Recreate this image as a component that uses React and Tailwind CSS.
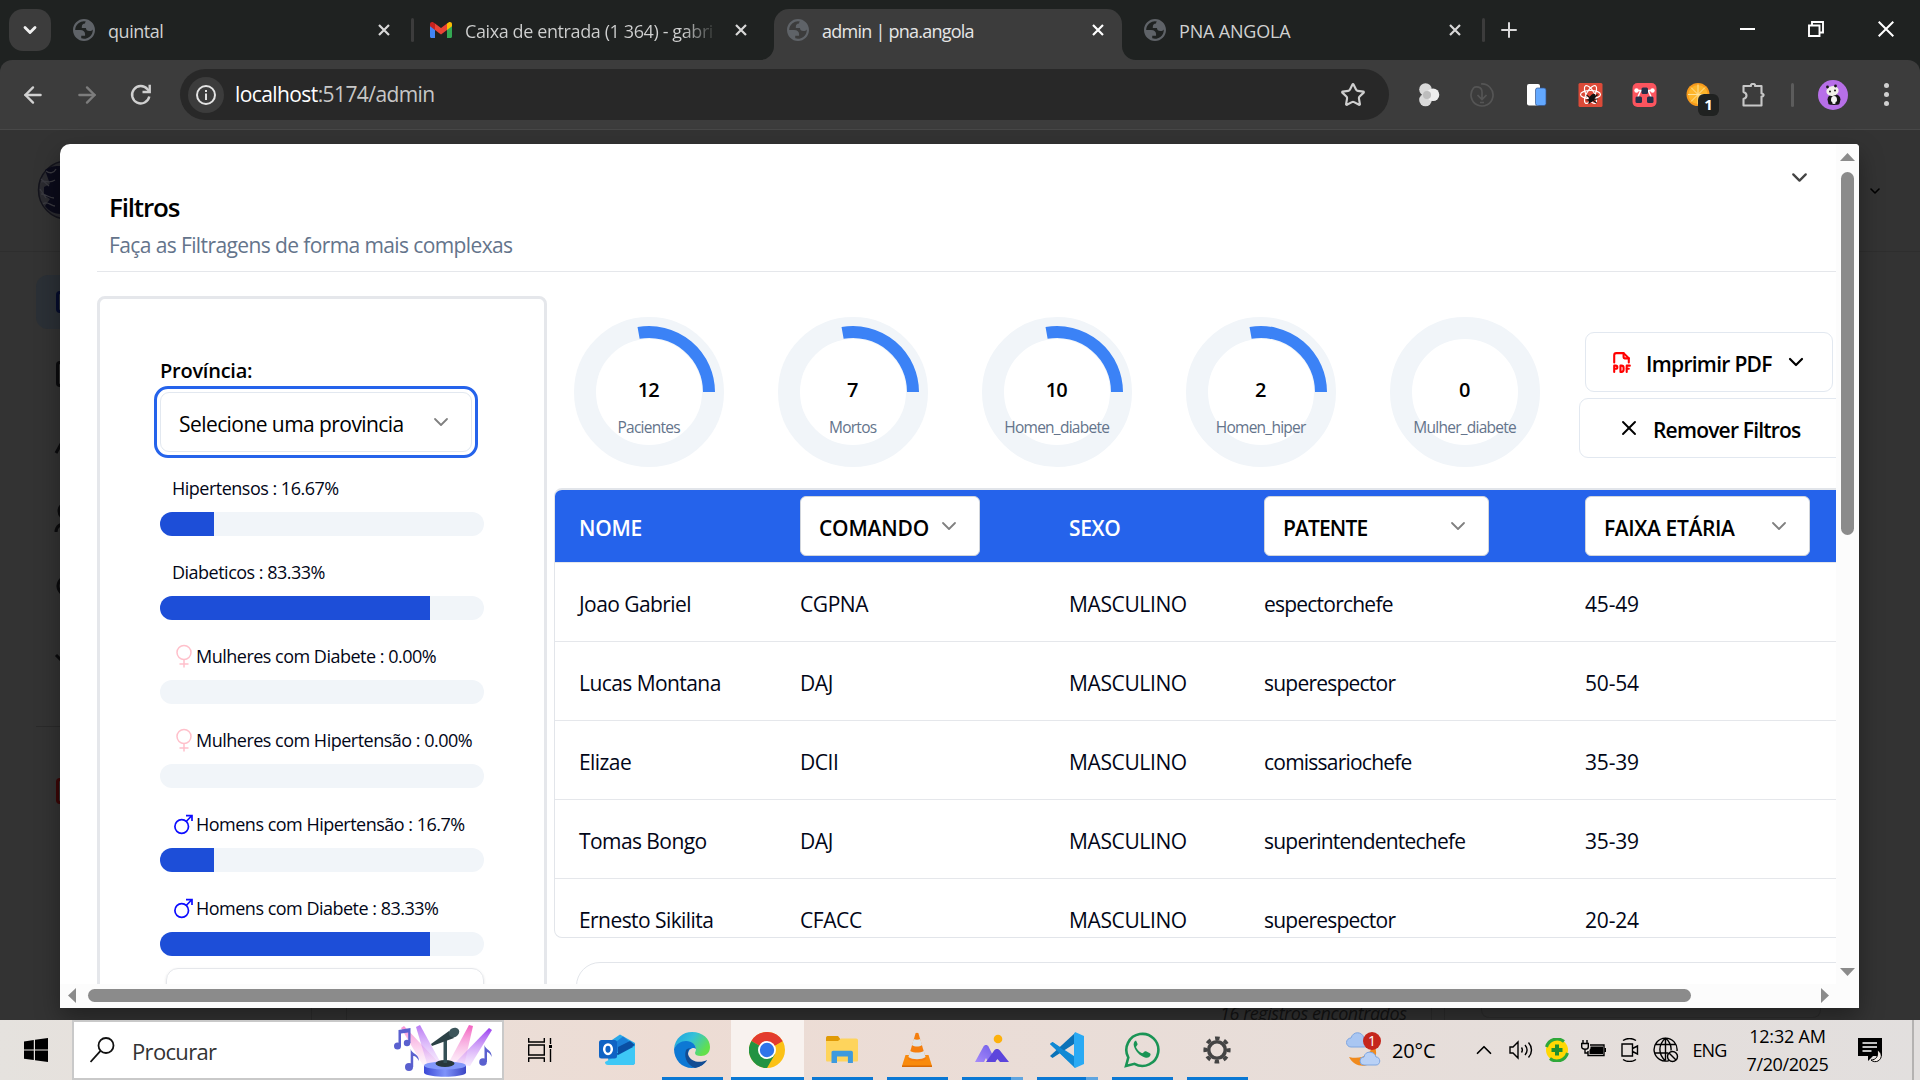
import React from "react";
import { TbFileTypePdf } from "react-icons/tb";
import { ArrowLeft, ArrowRight, ChevronDown, ChevronUp, Plus, Star, X } from "lucide-react";

/* ---------- Browser chrome ---------- */

function Globe() {
  return (
    <svg viewBox="2 2 20 20" className="size-[22px] shrink-0">
      <path
        fillRule="evenodd"
        fill="#5f6368"
        d="M12 2C6.480 2 2 6.480 2 12s4.480 10 10 10 10-4.480 10-10S17.520 2 12 2zM4 12h4.400c3.407.022 4.922 1.730 4.543 5.127H9.488v2.470a8.004 8.004 0 0 0 10.498-8.083C19.327 12.504 18.332 13 17 13c-2.137 0-3.206-.916-3.206-2.750h-3.748c-.274-2.728.683-4.092 2.870-4.092 0-.975.327-1.597.811-1.970A8.004 8.004 0 0 0 4 12z"
      />
    </svg>
  );
}

function Gmail() {
  return (
    <svg viewBox="0 0 22 16" className="h-4 w-[22px] shrink-0">
      <path d="M0 2v12.500c0 .8.7 1.500 1.500 1.500H5V6z" fill="#4285f4" />
      <path d="M22 2v12.500c0 .8-.7 1.500-1.500 1.500H17V6z" fill="#34a853" />
      <path d="M17 1.600V8l5-3.700V2.200c0-2-2-2.800-3.500-1.700z" fill="#fbbc04" />
      <path d="M5 1.600V8L0 4.300V2.200C0 .2 2-.6 3.500.5z" fill="#c5221f" />
      <path d="M5 8V1.600l6 4.500 6-4.500V8l-6 4.500z" fill="#ea4335" />
    </svg>
  );
}

function TabClose({ bright }) {
  return (
    <svg viewBox="0 0 12 12" className="size-3 shrink-0">
      <path d="M1 1l10 10M11 1L1 11" stroke={bright ? "#fff" : "#d8d8d8"} strokeWidth="2.2" />
    </svg>
  );
}

function Tab({ icon, children }) {
  return (
    <div className="flex w-[317px] items-center gap-[13px]">
      {icon}
      <div className="min-w-0 flex-1 whitespace-nowrap pt-[3px] text-[18px] text-[#d0d1d1]">{children}</div>
      <TabClose />
    </div>
  );
}

function TabStrip() {
  return (
    <div className="flex h-[60px] shrink-0 bg-[#1f2221]">
      <div className="ml-[9px] mt-[9px] flex size-[42px] items-center justify-center rounded-[14px] bg-[#3c3c3c]">
        <ChevronDown size={20} strokeWidth={3.4} color="#f0f0f0" />
      </div>
      <div className="ml-[22px] flex">
        <Tab icon={<Globe />}>
          <span className="tracking-[-0.025em]">quintal</span>
        </Tab>
      </div>
      <div className="ml-[21px] mt-[18px] h-6 w-[3px] rounded bg-[#3c3c3c]" />
      <div className="ml-4 flex">
        <Tab icon={<Gmail />}>
          <span className="bg-gradient-to-r from-[#d0d1d1] from-88% to-[#3a3d3c] bg-clip-text tracking-[-0.022em] text-transparent">
            Caixa de entrada (1 364) - gabri
          </span>
        </Tab>
      </div>
      <div className="relative ml-[27px] mt-[9px] flex w-[348px] items-center rounded-t-[15px] bg-[#3c3c3c] pb-[9px] pl-[13px] pr-[18px]">
        <svg viewBox="0 0 14 14" className="absolute -left-[14px] bottom-0 size-[14px]">
          <path d="M14 0V14H0A14 14 0 0 0 14 0z" fill="#3c3c3c" />
        </svg>
        <svg viewBox="0 0 14 14" className="absolute -right-[14px] bottom-0 size-[14px]">
          <path d="M0 0V14H14A14 14 0 0 1 0 0z" fill="#3c3c3c" />
        </svg>
        <Globe />
        <span className="ml-[13px] flex-1 whitespace-nowrap pt-[3px] text-[18px] tracking-[-0.042em] text-[#e6e6e6]">
          admin | pna.angola
        </span>
        <TabClose bright />
      </div>
      <div className="ml-[22px] flex">
        <Tab icon={<Globe />}>
          <span className="tracking-[-0.010em]">PNA ANGOLA</span>
        </Tab>
      </div>
      <div className="ml-[21px] mt-[18px] h-6 w-[3px] rounded bg-[#3c3c3c]" />
      <div className="ml-3 flex items-center">
        <Plus size={24} strokeWidth={2} color="#dadada" />
      </div>
      <div className="ml-auto mr-[26px] flex items-center pb-[2px]">
        <div className="h-[2px] w-[15px] bg-white" />
        <svg viewBox="0 0 16 16" className="ml-[53px] size-4">
          <path d="M1 4.500h10.500V15H1zM4 4V1h11v10.500h-3" fill="none" stroke="#fff" strokeWidth="1.900" />
        </svg>
        <svg viewBox="0 0 16 16" className="ml-[54px] size-4">
          <path d="M.7.7l14.600 14.600M15.300.7L.7 15.300" stroke="#fff" strokeWidth="2" />
        </svg>
      </div>
    </div>
  );
}

function Extensions() {
  return (
    <div className="ml-[26px] flex items-center gap-7">
      <svg viewBox="0 0 26 26" className="size-[26px]">
        <circle cx="10.500" cy="7.500" r="6.300" fill="#d9d9d9" />
        <circle cx="10.500" cy="18" r="6.300" fill="#d9d9d9" />
        <circle cx="18" cy="12.800" r="6.300" fill="#efefef" />
        <circle cx="12" cy="13" r="4" fill="#bdbdbd" />
      </svg>
      <svg viewBox="0 0 26 26" className="size-[26px]" fill="none" stroke="#555" strokeWidth="1.700">
        <path d="M12 2A11 11 0 1 1 4.500 6C6.500 4 13 4.500 13 10v7.500M8.500 13l4.500 4.500 4.500-4.500M11 20.500h4" />
      </svg>
      <svg viewBox="0 0 26 26" className="size-[26px]">
        <rect x="4" y="2" width="13" height="21.500" rx="2" fill="#fff" />
        <rect x="12.500" y="6" width="10.500" height="17.500" rx="2" fill="#62a8ff" stroke="#35548c" strokeWidth=".7" />
      </svg>
      <svg viewBox="0 0 26 26" className="size-[26px]">
        <rect x="1.500" y="1" width="24" height="24" rx="1.500" fill="#dc4a38" />
        <g fill="none" stroke="#fff" strokeWidth="1.200">
          <ellipse cx="13.500" cy="12.500" rx="10" ry="4" />
          <ellipse cx="13.500" cy="12.500" rx="10" ry="4" transform="rotate(60 13.500 12.500)" />
          <ellipse cx="13.500" cy="12.500" rx="10" ry="4" transform="rotate(120 13.500 12.500)" />
        </g>
        <ellipse cx="15" cy="16" rx="2.600" ry="4.800" fill="#111" transform="rotate(35 15 16)" />
        <path d="M9.500 13l10 8M20.500 12.500l-9 9M9.500 18l11-1" stroke="#111" strokeWidth="1.200" />
      </svg>
      <svg viewBox="0 0 26 26" className="size-[26px]">
        <rect x="1.500" y="1" width="24" height="24" rx="5" fill="#fb545e" />
        <path d="M5.500 8.500h16M9.500 9L6 17M17.500 9l3.500 8" stroke="#fff" strokeWidth="1.500" />
        <circle cx="5.500" cy="8.500" r="2.200" fill="#fff" />
        <circle cx="21.500" cy="8.500" r="2.200" fill="#fff" />
        <rect x="10.500" y="5.500" width="6.500" height="6.500" rx="1.500" fill="#25304a" />
        <rect x="4.500" y="14.500" width="6.500" height="6.500" rx="1.500" fill="#25304a" />
        <rect x="16" y="14.500" width="6.500" height="6.500" rx="1.500" fill="#25304a" />
      </svg>
      <div className="relative size-[26px]">
        <svg viewBox="0 0 26 26" className="size-[26px]">
          <circle cx="13" cy="12.500" r="11.500" fill="#f79a1c" />
          <circle cx="13" cy="12.500" r="9.600" fill="#fdb52b" />
          <path
            d="M13 2.500v20M3 12.500h20M6 5.500l14 14M20 5.500l-14 14"
            stroke="#ffe29a"
            strokeWidth="1"
          />
        </svg>
        <div className="absolute left-[13px] top-[12px] flex h-[22px] w-[21px] items-center justify-center rounded-[6px] bg-[#202221] text-[15px] font-bold leading-none text-white">
          1
        </div>
      </div>
      <svg viewBox="0 0 26 26" className="size-[26px]" fill="none" stroke="#c7c7c7" strokeWidth="2.100">
        <path
          d="M6.500 4h5.500a1.500 1.500 0 0 1 1-2h2a1.500 1.500 0 0 1 1 2h6.500v7.500a2 2 0 0 1 2 1v1a2 2 0 0 1-2 1V23.500H4.500v-6.500c4-1.500 4-5.500 0-7V4z"
          strokeLinejoin="round"
        />
      </svg>
    </div>
  );
}

function Toolbar() {
  return (
    <div className="h-[70px] shrink-0 bg-[#1f2221]">
      <div className="flex h-[70px] items-center rounded-t-[12px] border-b border-[#484848] bg-[#3c3c3c]">
        <ArrowLeft className="ml-5" size={26} strokeWidth={2.2} color="#d0d0d0" />
        <ArrowRight className="ml-7" size={26} strokeWidth={2.2} color="#7d7d7d" />
        <svg viewBox="0 0 24 24" className="ml-[29px] size-6" fill="none" stroke="#d0d0d0" strokeWidth="2.400">
          <path d="M20.300 13.500A8.700 8.700 0 1 1 18.500 6.200L20 8" />
          <path d="M20.700 1.800V9H13.500" />
        </svg>
        <div className="ml-[27px] flex h-[51px] w-[1209px] items-center rounded-full bg-[#282828] pl-2 pr-[23px]">
          <div className="flex size-9 items-center justify-center rounded-full bg-[#3c3c3c]">
            <svg viewBox="0 0 22 22" className="size-[22px]">
              <circle cx="11" cy="11" r="9" fill="none" stroke="#e3e3e3" strokeWidth="2" />
              <path d="M10 9.500h2V16h-2zM10 6h2v2h-2z" fill="#e3e3e3" />
            </svg>
          </div>
          <span className="ml-[11px] text-[21px] leading-none tracking-[-0.028em] text-[#c7c7c7]">
            <span className="text-white">localhost</span>:5174/admin
          </span>
          <Star className="ml-auto" size={26} strokeWidth={2} color="#cfcfcf" />
        </div>
        <Extensions />
        <div className="ml-[26px] h-6 w-[3px] rounded bg-[#5c5c5c]" />
        <svg viewBox="0 0 30 30" className="ml-6 size-[30px]">
          <circle cx="15" cy="15" r="15" fill="#b76fe8" />
          <ellipse cx="16" cy="19.500" rx="6.500" ry="5.500" fill="#161616" />
          <ellipse cx="16" cy="20" rx="3" ry="4" fill="#f4f4f4" />
          <ellipse cx="14.500" cy="11" rx="6.200" ry="4.800" fill="#f1f1e9" transform="rotate(-12 14.500 11)" />
          <circle cx="9.500" cy="7" r="1.400" fill="#161616" />
          <circle cx="17.500" cy="6" r="1.400" fill="#161616" />
          <circle cx="12" cy="11.500" r="1" fill="#161616" />
          <circle cx="17" cy="10.500" r="1" fill="#161616" />
          <ellipse cx="12.300" cy="23" rx="2.200" ry="1.700" fill="#161616" />
          <ellipse cx="19.500" cy="23" rx="2.200" ry="1.700" fill="#161616" />
        </svg>
        <div className="ml-9 flex flex-col gap-[4px]">
          <div className="size-[5px] rounded-full bg-[#d0d0d0]" />
          <div className="size-[5px] rounded-full bg-[#d0d0d0]" />
          <div className="size-[5px] rounded-full bg-[#d0d0d0]" />
        </div>
      </div>
    </div>
  );
}

/* ---------- Dimmed page behind the dialog ---------- */

function Backdrop() {
  return (
    <div className="flex h-full flex-col bg-[#333]">
      <div className="flex h-[122px] shrink-0 items-start justify-between border-b border-[#2e2e2e] pl-[37px] pr-[37px]">
        <svg viewBox="0 0 60 60" className="mt-[30px] size-[60px]">
          <ellipse cx="30" cy="30" rx="28.500" ry="29" fill="#2b2b30" stroke="#14141c" strokeWidth="1.500" />
          <path d="M8 10c6-4 10-4 16-4v48c-8 0-13-4-16-8l5-7-6-4v-8l6-3z" fill="#0b0b1a" />
          <path
            d="M9 11c4 3 8 2 10-2M4 22c6-2 8 2 14-2M4 34c5 0 8 4 13 4M6 44c4-4 8 2 12 2M3 29l6 9M4 19l8 7"
            stroke="#3a3a40"
            strokeWidth="1.300"
            fill="none"
          />
        </svg>
        <ChevronDown className="mt-[53px]" size={16} strokeWidth={2.4} color="#000" />
      </div>
      <div className="flex flex-1 justify-between">
        <div className="flex w-20 flex-col pl-9">
          <div className="mt-[23px] flex h-[54px] items-center rounded-l-xl bg-[#2b3036] pl-[20px]">
            <div className="h-[22px] w-6 rounded border-[3px] border-[#050c2c]" />
          </div>
          <div className="ml-5 mt-8 h-[26px] w-6 rounded-sm border-[3px] border-[#0b0b0d]" />
          <svg viewBox="0 0 26 200" className="ml-[18px] mt-[44px] h-[200px] w-[26px]" fill="none" stroke="#0b0b0d" strokeWidth="3">
            <path d="M2 22L12 4l10 18" />
            <circle cx="13" cy="80" r="8" />
            <path d="M2 101c0-12 22-12 22 0M13 146a9 9 0 1 0 .1 0z" />
          </svg>
          <svg viewBox="0 0 26 20" className="ml-[18px] mt-[20px] h-5 w-[26px]" fill="none" stroke="#0b0b0d" strokeWidth="3">
            <path d="M2 4l10 10L22 4" />
          </svg>
          <div className="mt-[55px] h-px bg-[#2a2a2a]" />
          <div className="ml-5 mt-[51px] h-[26px] w-6 rounded border-[3px] border-[#3b0606]" />
        </div>
      </div>
      <div className="flex h-[20px] items-start">
        <div className="ml-[311px] h-full w-9 border-x border-[#2c2c2c]" />
        <span className="ml-[873px] whitespace-nowrap text-[18px] italic leading-[26px] tracking-[-0.025em] text-[#131313]">
          16 registros encontrados
        </span>
        <div className="ml-6 h-full w-3.5 border-x border-[#2c2c2c]" />
        <div className="ml-9 h-[18px] w-[340px] rounded-b-lg border border-t-0 border-[#2c2c2c]" />
      </div>
    </div>
  );
}

/* ---------- Dialog ---------- */

function FemaleIcon() {
  return (
    <svg viewBox="0 0 22 24" className="h-6 w-[22px]" fill="none" stroke="#ffc0cb" strokeWidth="1.500">
      <circle cx="12" cy="8.500" r="7" />
      <path d="M12 15.500v8M7.500 20h9" />
    </svg>
  );
}

function MaleIcon() {
  return (
    <svg viewBox="0 0 22 24" className="h-6 w-[22px]" fill="none" stroke="#0d0dff" strokeWidth="1.700">
      <circle cx="9.700" cy="14.500" r="6.800" />
      <path d="M14.200 9.500L19.500 4M14 3.700H20V9" />
    </svg>
  );
}

const bars = [
  { label: "Hipertensos : 16.67%", value: 16.67 },
  { label: "Diabeticos : 83.33%", value: 83.33 },
  { label: "Mulheres com Diabete : 0.00%", value: 0, icon: "f" },
  { label: "Mulheres com Hipertensão : 0.00%", value: 0, icon: "f" },
  { label: "Homens com Hipertensão : 16.7%", value: 16.67, icon: "m" },
  { label: "Homens com Diabete : 83.33%", value: 83.33, icon: "m" },
];

function Sidebar() {
  return (
    <div className="h-[800px] w-[450px] shrink-0 rounded-t-lg border-[3px] border-[#e5e7eb] pl-[60px] pt-[57px]">
      <div className="h-[30px] text-[20px] font-semibold leading-[30px] tracking-[-0.012em] text-black">Província:</div>
      <div className="-ml-1.5 h-[72px] w-[324px] rounded-[14px] border-[3px] border-[#2563eb] p-[3px]">
        <div className="flex h-full items-center justify-between rounded-[9px] border border-[#e2e8f0] pl-[18px] pr-[18px]">
          <span className="pt-1 text-[21px] leading-none tracking-[-0.027em] text-black">Selecione uma provincia</span>
          <ChevronDown size={24} strokeWidth={1.8} color="#808080" />
        </div>
      </div>
      <div className="mt-[15px] flex w-[324px] flex-col gap-[21px]">
        {bars.map((b) => (
          <div key={b.label}>
            <div className="flex h-[30px] items-center whitespace-nowrap pl-3 text-[18px] tracking-[-0.028em] text-[#020617]">
              {b.icon === "f" && <span className="mr-[2px]"><FemaleIcon /></span>}
              {b.icon === "m" && <span className="mr-[2px]"><MaleIcon /></span>}
              {b.label}
            </div>
            <div className="mt-[9px] h-6 overflow-hidden rounded-full bg-[#f1f5f9]">
              <div className="h-full bg-[#1d4ed8]" style={{ width: `${b.value}%` }} />
            </div>
          </div>
        ))}
      </div>
      <div className="ml-1.5 mt-3 h-[60px] w-[318px] rounded-xl border border-[#e5e7eb] shadow" />
    </div>
  );
}

function Donut({ value, label, filled }) {
  return (
    <svg viewBox="0 0 150 150" className="size-[150px] shrink-0 overflow-visible font-['Open_Sans',sans-serif]">
      <circle cx="75" cy="75" r="64" fill="none" stroke="#f1f5f9" strokeWidth="22" />
      {filled && (
        <path d="M135 75A60 60 0 0 0 64.580 15.910" fill="none" stroke="#3b82f6" strokeWidth="12" />
      )}
      <text x="74.300" y="79.500" textAnchor="middle" className="fill-black text-[20px] font-semibold tracking-[-0.050em]">
        {value}
      </text>
      <text x="74.700" y="115.500" textAnchor="middle" className="fill-[#64748b] text-[15.5px] tracking-[-0.048em]">
        {label}
      </text>
    </svg>
  );
}

function HeaderSelect({ children, className }) {
  return (
    <div
      className={`flex h-[60px] items-center justify-between rounded-md border border-[#d1d5db] bg-white pl-[18px] pr-[18px] text-black ${className}`}
    >
      {children}
      <ChevronDown size={24} strokeWidth={1.8} color="#808080" />
    </div>
  );
}

const rows = [
  ["Joao Gabriel", "CGPNA", "MASCULINO", "espectorchefe", "45-49"],
  ["Lucas Montana", "DAJ", "MASCULINO", "superespector", "50-54"],
  ["Elizae", "DCII", "MASCULINO", "comissariochefe", "35-39"],
  ["Tomas Bongo", "DAJ", "MASCULINO", "superintendentechefe", "35-39"],
  ["Ernesto Sikilita", "CFACC", "MASCULINO", "superespector", "20-24"],
];

function Table() {
  return (
    <div className="flex h-[450px] w-[1500px] flex-col overflow-hidden rounded-l-lg border border-t-2 border-[#e2e5ea] text-[21px] leading-none">
      <div className="grid h-[73px] shrink-0 grid-cols-[221px_269px_195px_321px_1fr] items-center border-b border-[#e5e7eb] bg-[#2563eb] pl-6 font-semibold text-white">
        <span className="pt-1 tracking-[-0.012em]">NOME</span>
        <HeaderSelect className="w-[180px]">
          <span className="pt-1 tracking-[-0.010em]">COMANDO</span>
        </HeaderSelect>
        <span className="pt-1 tracking-[-0.018em]">SEXO</span>
        <HeaderSelect className="w-[225px]">
          <span className="pt-1 tracking-[-0.042em]">PATENTE</span>
        </HeaderSelect>
        <HeaderSelect className="w-[225px]">
          <span className="pt-1 tracking-[-0.018em]">FAIXA ETÁRIA</span>
        </HeaderSelect>
      </div>
      {rows.map((r) => (
        <div
          key={r[0]}
          className="grid h-[79px] shrink-0 grid-cols-[221px_269px_195px_321px_1fr] items-center border-b border-[#e5e7eb] pl-6 pt-1 text-[#020617]"
        >
          <span className="tracking-[-0.027em]">{r[0]}</span>
          <span className="tracking-[-0.020em]">{r[1]}</span>
          <span className="tracking-[-0.018em]">{r[2]}</span>
          <span className="tracking-[-0.037em]">{r[3]}</span>
          <span className="tracking-[-0.009em]">{r[4]}</span>
        </div>
      ))}
    </div>
  );
}

function Results() {
  return (
    <div className="ml-[7px] w-[1282px] shrink-0 overflow-hidden">
      <div className="flex h-[192px] items-start pl-5 pt-[21px]">
        <div className="flex gap-[54px]">
          <Donut value="12" label="Pacientes" filled />
          <Donut value="7" label="Mortos" filled />
          <Donut value="10" label="Homen_diabete" filled />
          <Donut value="2" label="Homen_hiper" filled />
          <Donut value="0" label="Mulher_diabete" />
        </div>
        <div className="ml-[39px] mt-[15px] flex flex-col gap-1.5 text-[21px] font-semibold leading-none text-black">
          <div className="ml-1.5 flex h-[60px] w-[248px] items-center rounded-[9px] border border-[#e2e8f0] pl-[23px]">
            <TbFileTypePdf size={25} color="#f00" />
            <span className="ml-3 w-[128px] whitespace-nowrap pt-1 tracking-[-0.034em]">Imprimir PDF</span>
            <ChevronDown className="ml-2.5" size={24} strokeWidth={2.2} />
          </div>
          <div className="flex h-[60px] w-[270px] items-center rounded-[9px] border border-[#e2e8f0] pl-[37px]">
            <X size={24} strokeWidth={1.9} />
            <span className="ml-3 whitespace-nowrap pt-1 tracking-[-0.038em]">Remover Filtros</span>
          </div>
        </div>
      </div>
      <Table />
      <div className="ml-[22px] mt-6 h-[60px] w-[1500px] rounded-3xl border border-[#e2e5ea]" />
    </div>
  );
}

function Dialog() {
  return (
    <div className="absolute left-[60px] top-[14px] flex h-[864px] w-[1799px] flex-col overflow-hidden rounded-tl-[10px] rounded-tr-[4px] bg-white shadow-[0_10px_24px_rgba(0,0,0,0.35)]">
      <div className="flex h-[840px]">
        <div className="flex h-[840px] w-[1776px] flex-col overflow-hidden pl-[37px]">
          <div className="flex h-32 shrink-0 justify-between border-b border-[#e5e7eb]">
            <div className="pl-3 pt-[50px]">
              <div className="h-[27px] text-[26px] font-semibold leading-[27px] tracking-[-0.045em] text-black">Filtros</div>
              <div className="mt-2 text-[21px] leading-8 tracking-[-0.029em] text-[#64748b]">
                Faça as Filtragens de forma mais complexas
              </div>
            </div>
            <ChevronDown className="mr-6 mt-[21px]" size={25} strokeWidth={2.2} color="#444" />
          </div>
          <div className="mt-6 flex flex-1">
            <Sidebar />
            <Results />
          </div>
        </div>
        <div className="flex w-[23px] flex-col items-center bg-[#fcfcfc]">
          <svg viewBox="0 0 15 8" className="mt-[9px] h-2 w-[15px]">
            <path d="M0 8L7.500 0 15 8z" fill="#8b8b8b" />
          </svg>
          <div className="mt-[11px] h-[363px] w-[13px] rounded-full bg-[#8b8b8b]" />
          <svg viewBox="0 0 15 8" className="mt-auto mb-2 h-2 w-[15px]">
            <path d="M0 0L7.500 8 15 0z" fill="#8b8b8b" />
          </svg>
        </div>
      </div>
      <div className="flex h-6 items-center bg-[#fcfcfc] pb-[2px]">
        <svg viewBox="0 0 8 15" className="ml-2 h-[15px] w-2">
          <path d="M8 0L0 7.500 8 15z" fill="#8b8b8b" />
        </svg>
        <div className="ml-3 h-[13px] w-[1603px] rounded-full bg-[#8b8b8b]" />
        <svg viewBox="0 0 8 15" className="ml-[130px] h-[15px] w-2">
          <path d="M0 0L8 7.500 0 15z" fill="#8b8b8b" />
        </svg>
      </div>
    </div>
  );
}

/* ---------- Taskbar ---------- */

function Stage() {
  return (
    <svg viewBox="0 0 100 56" className="h-14 w-[100px]">
      <defs>
        <linearGradient id="beamPink" x1="0" y1="0" x2="0" y2="1">
          <stop offset="0" stopColor="#f35fc0" />
          <stop offset="1" stopColor="#f9d3f0" stopOpacity=".3" />
        </linearGradient>
        <linearGradient id="beamViolet" x1="0" y1="0" x2="0" y2="1">
          <stop offset="0" stopColor="#9a3ff0" />
          <stop offset="1" stopColor="#e9c8fb" stopOpacity=".4" />
        </linearGradient>
        <linearGradient id="base" x1="0" x2="1">
          <stop offset="0" stopColor="#3b49d6" />
          <stop offset=".5" stopColor="#7f93fa" />
          <stop offset="1" stopColor="#3c46c4" />
        </linearGradient>
      </defs>
      <path d="M8 6l3-2 36 38-16 3z" fill="url(#beamPink)" opacity=".7" />
      <path d="M23 5l4-2 22 40-14 2z" fill="url(#beamViolet)" opacity=".7" />
      <path d="M76 3l4 1-9 40-16-2z" fill="url(#beamPink)" />
      <path d="M96 6l3 2-22 36-16-2z" fill="url(#beamViolet)" />
      <path d="M31 44v7c4 5 38 5 42 0v-7z" fill="url(#base)" />
      <ellipse cx="52" cy="43.500" rx="21" ry="4" fill="#8398fa" />
      <ellipse cx="52" cy="41.500" rx="9.500" ry="3.500" fill="#28383b" />
      <path d="M50.500 18h3.500v23h-3.500z" fill="#345056" />
      <path d="M38 22l18-13 5 7-22 8z" fill="#2c4146" />
      <ellipse cx="61" cy="10.500" rx="5.500" ry="4.500" fill="#3c555a" transform="rotate(-30 61 10.500)" />
      <g fill="#5a60cf">
        <circle cx="4.500" cy="24" r="3.500" />
        <circle cx="14" cy="21" r="3.200" />
        <path d="M5.500 8l12-2v15h-2.300V10.500L8 11.500v12.500H5.500z" />
        <circle cx="16" cy="45" r="4" />
        <path d="M17.700 27c1 5 9 5 8 12-1-3-3-5-5.500-5v11h-2.500z" />
        <circle cx="90" cy="40" r="3.800" />
        <path d="M91.500 23c1 5 8 5 7 12-1-3-2-4-4.500-5v10h-2.500z" />
      </g>
    </svg>
  );
}

function Outlook() {
  return (
    <svg viewBox="0 0 38 34" className="h-[34px] w-[38px]">
      <path d="M7 11L21 1.500 36 10v19c0 2-1 3-3 3H10z" fill="#29a8e8" />
      <path d="M17 21l14-9 5 3-12 9z" fill="#0a52a8" />
      <path d="M13 12L24 3.500 31 9 17 20z" fill="#1a7fd8" />
      <path d="M19 14l12-6 5 4-17 9z" fill="#0a4fa3" />
      <path d="M6 29l30-16v16c0 2-1 3-3 3H9c-2 0-3-1-3-3z" fill="#3ec8f6" />
      <rect y="7" width="18" height="18.500" rx="2.500" fill="#0f63c4" />
      <ellipse cx="9" cy="16.200" rx="3.800" ry="4.700" fill="none" stroke="#fff" strokeWidth="2.500" />
    </svg>
  );
}

function Edge() {
  return (
    <svg viewBox="0 0 36 36" className="size-9">
      <defs>
        <linearGradient id="edgeTop" x1="0" x2="1" y1="0" y2=".5">
          <stop offset="0" stopColor="#1c9fe0" />
          <stop offset=".5" stopColor="#35c1d9" />
          <stop offset="1" stopColor="#62e04b" />
        </linearGradient>
      </defs>
      <path d="M0 17C1 6 9 0 18 0c11 0 18 7 18 15 0 6-4 9-9 9-4 0-6-1-6-3 0-1 1-2 1-4 0-4-4-7-9-7C7 10 2 13 0 17z" fill="url(#edgeTop)" />
      <path d="M0 17c2-5 7-8 12-8 6 0 10 4 10 8-2-2-8-1-8 6s7 9 12 8c3 0 6-2 7-3-3 5-9 8-15 8C8 36 0 28 0 17z" fill="#0d78d4" />
      <path d="M12 18c-3 9 3 16 9 18 5-1 10-4 12-8-5 3-17 3-19-6 0-2 0-5 3-6-3 0-4 1-5 2z" fill="#124c93" />
    </svg>
  );
}

function Chrome() {
  return (
    <svg viewBox="0 0 36 36" className="size-9">
      <circle cx="18" cy="18" r="18" fill="#fbc116" />
      <path d="M18 18L2.400 9A18 18 0 0 1 33.600 9z" fill="#e33b2e" />
      <path d="M2.400 9A18 18 0 0 0 18 36l7.800-13.500L18 18z" fill="#229342" />
      <path d="M18 9h15.600L18 18z" fill="#e33b2e" />
      <circle cx="18" cy="18" r="9" fill="#fff" />
      <circle cx="18" cy="18" r="7.200" fill="#2f74ea" />
    </svg>
  );
}

function Folder() {
  return (
    <svg viewBox="0 0 34 28" className="h-7 w-[34px]">
      <path d="M1 2c0-1 .5-2 1.500-2H13l3 4-2 3H1z" fill="#e09a06" />
      <path d="M1 5h12l3-2.500h15c1.500 0 2 .7 2 2V24c0 1-.5 1.500-1.500 1.500h-29C1.500 25.500 1 25 1 24z" fill="#fed45c" />
      <path d="M6.500 27V16.500c0-1 .6-1.700 1.700-1.700h18c1 0 1.700.7 1.700 1.700V27h-5v-6.500H12V27z" fill="#3d9ade" />
    </svg>
  );
}

function Vlc() {
  return (
    <svg viewBox="0 0 32 36" className="h-9 w-8">
      <path d="M4.500 23h23L31 34H1z" fill="#f98a0c" />
      <path d="M1 33.500h30V35H1z" fill="#d96a04" />
      <path d="M14.500 1.500c.5-1 2.500-1 3 0L25 27c-3 3-15 3-18 0z" fill="#f47e0e" />
      <path d="M12.700 7c2 1 4.600 1 6.600 0l1.800 6c-3 2-7.200 2-10.200 0zM9.200 19c4 2 9.600 2 13.600 0l1.800 6c-4 3-13.200 3-17.200 0z" fill="#dfe3e6" />
    </svg>
  );
}

function PeakApp() {
  return (
    <svg viewBox="0 0 36 34" className="h-[34px] w-9">
      <defs>
        <linearGradient id="peakA" x1="0" y1="1" x2="1" y2="0">
          <stop offset="0" stopColor="#a78bfa" />
          <stop offset="1" stopColor="#6d5be8" />
        </linearGradient>
      </defs>
      <circle cx="24" cy="6" r="4.300" fill="#fdb10c" />
      <path d="M1 29L9.500 13.500c1-2 4-2 5 0L22 29h-8l-2-4-2 4z" fill="url(#peakA)" />
      <path d="M12 29l8.500-12c1-1.500 4-1.500 5 0L35 29h-9l-2.500-3-2.500 3z" fill="#5c45dc" />
    </svg>
  );
}

function VsCode() {
  return (
    <svg viewBox="0 0 36 36" className="size-9">
      <path d="M3.500 10L1 12l25 23 2-9z" fill="#0d8fdd" />
      <path d="M3.500 26L1 24 26 1l2 9z" fill="#0b72b8" />
      <path d="M1 12l2.500-2L28 28l-2 8z" fill="#1089d4" />
      <path d="M26 0l9 4v28l-9 4-1-2.500V2.500z" fill="#2aaaf4" />
    </svg>
  );
}

function WhatsApp() {
  return (
    <svg viewBox="0 0 36 36" className="size-9" fill="none">
      <path d="M2 34l2.300-8.500A16 16 0 1 1 10.500 31.800z" stroke="#1a9455" strokeWidth="2.600" />
      <path
        d="M12.500 9.500c-2 .8-3 3-2 6 1.500 5 6 9.500 11 11 3 .8 5-.5 5.500-2.500.2-1 0-1.500-1-2l-3.500-1.700c-1-.4-1.500 0-2 .7-.8 1-1.300 1.400-2.300 1-2.700-1.300-4.200-3-5.400-5.200-.5-1 0-1.500.7-2.300.5-.6.700-1 .4-2l-1.400-3z"
        fill="#1a9455"
        transform="translate(-.5 -1)"
      />
    </svg>
  );
}

function Gear() {
  return (
    <svg viewBox="0 0 28 28" className="size-7" fill="none" stroke="#444">
      <circle cx="14" cy="14" r="8.300" strokeWidth="3.600" />
      <circle cx="14" cy="14" r="11.800" strokeWidth="3.600" strokeDasharray="4.600 4.668" strokeDashoffset="2.300" />
    </svg>
  );
}

function TaskIcon({ children, active, stacked }) {
  return (
    <div className={`flex h-[60px] flex-col ${active ? "w-[73px] bg-[#f8f2ef]" : "w-[61px]"}`}>
      <div className="flex flex-1 items-center justify-center pr-[2px] pt-[3px]">{children}</div>
      <div className="flex h-[3px]">
        <div className="flex-1 bg-[#0a78d4]" />
        {stacked && <div className="w-3 bg-[#5fa5e0]" />}
      </div>
    </div>
  );
}

function Taskbar() {
  return (
    <div className="z-10 flex h-[60px] shrink-0 items-center bg-gradient-to-r from-[#e5e2de] via-[#eddcd4] via-35% to-[#e2dfde]">
      <svg viewBox="0 0 24 24" className="ml-6 size-6">
        <path d="M0 3.400L9.800 2v9.500H0zM11 1.800L24 0v11.500H11zM0 12.600h9.800V22L0 20.700zM11 12.600h13V24l-13-1.800z" fill="#000" />
      </svg>
      <div className="ml-6 flex h-[60px] w-[432px] items-center border-2 border-[#c9c9c9] bg-white pl-4">
        <svg viewBox="0 0 26 26" className="size-[26px]" fill="none" stroke="#111" strokeWidth="1.800">
          <circle cx="16" cy="8.500" r="7.500" />
          <path d="M10.500 13.800L.5 25" />
        </svg>
        <span className="ml-4 pt-[1px] text-[22px] leading-none tracking-[-0.030em] text-[#333]">Procurar</span>
        <div className="ml-auto mr-[9px]">
          <Stage />
        </div>
      </div>
      <svg viewBox="0 0 25 24" className="ml-6 h-6 w-[25px]" fill="none" stroke="#000" strokeWidth="1.400">
        <path d="M.7 0v4h15.600V0M.7 24v-4h15.600v4M.7 7h15.600v10H.7zM22.500 0v6M22.500 11v13" />
        <path d="M21 7h3v3h-3z" fill="#000" stroke="none" />
      </svg>
      <div className="ml-[46px]">
        <Outlook />
      </div>
      <div className="ml-[25px] flex">
        <TaskIcon><Edge /></TaskIcon>
        <div className="ml-2"><TaskIcon active><Chrome /></TaskIcon></div>
        <div className="ml-2 flex gap-3.5">
          <TaskIcon><Folder /></TaskIcon>
          <TaskIcon><Vlc /></TaskIcon>
          <TaskIcon stacked><PeakApp /></TaskIcon>
          <TaskIcon stacked><VsCode /></TaskIcon>
          <TaskIcon><WhatsApp /></TaskIcon>
          <TaskIcon><Gear /></TaskIcon>
        </div>
      </div>
      <div className="relative ml-[98px] mt-[-3px]">
        <svg viewBox="0 0 36 36" className="size-9">
          <path d="M27 13c5 6 4 16-3 20-8 4-17 1-21-7 12 3 22-2 24-13z" fill="#f08a1d" />
          <path d="M5 16a4.500 4.500 0 0 1 0-9C7 0 16 0 18 7c5 0 5 9 0 9z" fill="#a9c6f2" stroke="#7fa6e0" />
          <path d="M18 34a4 4 0 0 1 0-8c1-7 11-6 12 0 5 0 5 8 0 8z" fill="#b9d1f6" stroke="#7fa6e0" />
        </svg>
        <div className="absolute left-[17px] top-[1px] flex size-[18px] items-center justify-center rounded-full bg-[#c5261c] text-[14px] leading-none text-white">
          1
        </div>
      </div>
      <span className="ml-2.5 pt-0.5 text-[20px] leading-none tracking-[-0.007em] text-black">20°C</span>
      <ChevronUp className="ml-9" size={26} strokeWidth={1.6} color="#000" />
      <svg viewBox="0 0 24 20" className="ml-3 h-5 w-6" fill="none" stroke="#000" strokeWidth="1.400">
        <path d="M1 7h3l5-5v16l-5-5H1zM12.500 7.500c1 1.500 1 3.500 0 5M16 5c2.500 3 2.500 7 0 10M19.500 2.500c4 4.500 4 10.500 0 15" />
      </svg>
      <svg viewBox="0 0 24 24" className="ml-3 size-6">
        <circle cx="12" cy="12" r="11" fill="#ffd803" />
        <path d="M1.500 9A11 11 0 0 1 19 3.500M22.500 15A11 11 0 0 1 5 20.500" fill="none" stroke="#2fa83a" strokeWidth="3" />
        <path d="M10 6.500h4V10h3.500v4H14v3.500h-4V14H6.500v-4H10z" fill="#1f8f2e" />
      </svg>
      <svg viewBox="0 0 26 20" className="ml-3 h-5 w-[26px]" fill="none" stroke="#000" strokeWidth="1.400">
        <path d="M2 0v3M6 0v3M.7 3.500h6.600V7c0 3-6.600 3-6.600 0zM4 9.500V13h3M9 5h14v10.500H7V11" />
        <path d="M9.500 6.500H22v7.500H8.500V10c1-1 1-2 1-3.500zM23.500 8H25v4h-1.500z" fill="#000" stroke="none" />
      </svg>
      <svg viewBox="0 0 18 24" className="ml-3.5 h-6 w-[18px]" fill="none" stroke="#000" strokeWidth="1.400">
        <path d="M2 2.500c4-2.500 9-2.500 13 0M2 21.500c4 2.500 9 2.500 13 0M1 6h10.500v12H1zM11.500 10.500L16.500 8v8l-5-2.500" />
      </svg>
      <svg viewBox="0 0 26 26" className="ml-3.5 size-[26px]" fill="none" stroke="#000" strokeWidth="1.400">
        <path d="M16 23.600A11.500 11.500 0 1 1 24 14M12.500 1C5 8 5 17 12.500 24M12.500 1c4 3.500 6 8 5.500 12.500M2.500 7.500h20M1 16h14M12.500 1v22" />
        <circle cx="19.500" cy="19.500" r="5" />
        <path d="M16 16l7 7" />
      </svg>
      <span className="ml-[13px] text-[18px] leading-none tracking-[-0.050em] text-black">ENG</span>
      <div className="ml-[19px] flex w-[84px] flex-col items-center text-[18px] leading-7 text-black">
        <span className="whitespace-nowrap tracking-[-0.012em]">12:32 AM</span>
        <span className="whitespace-nowrap tracking-[-0.021em]">7/20/2025</span>
      </div>
      <svg viewBox="0 0 26 25" className="ml-[29px] h-[25px] w-[26px]">
        <path d="M0 0h24v18h-9l-5 5v-5H0z" fill="#000" />
        <path d="M4.500 5h14.500M4.500 9h14.500M4.500 13h9" stroke="#fff" strokeWidth="1.300" />
        <path d="M19 12c5 2 6 8 1 11-2 1-5 1-7-1 5 0 8-4 6-10z" fill="#f4ede8" stroke="#000" strokeWidth="1" />
      </svg>
      <div className="ml-auto mr-[6px] h-[60px] w-[2px] bg-[#b4b2b1]" />
    </div>
  );
}

export default function App() {
  return (
    <div className="flex h-[1080px] w-[1920px] flex-col overflow-hidden bg-[#333] font-['Open_Sans','Noto_Sans',sans-serif]">
      <TabStrip />
      <Toolbar />
      <div className="relative h-[890px] shrink-0">
        <Backdrop />
        <Dialog />
      </div>
      <Taskbar />
    </div>
  );
}
